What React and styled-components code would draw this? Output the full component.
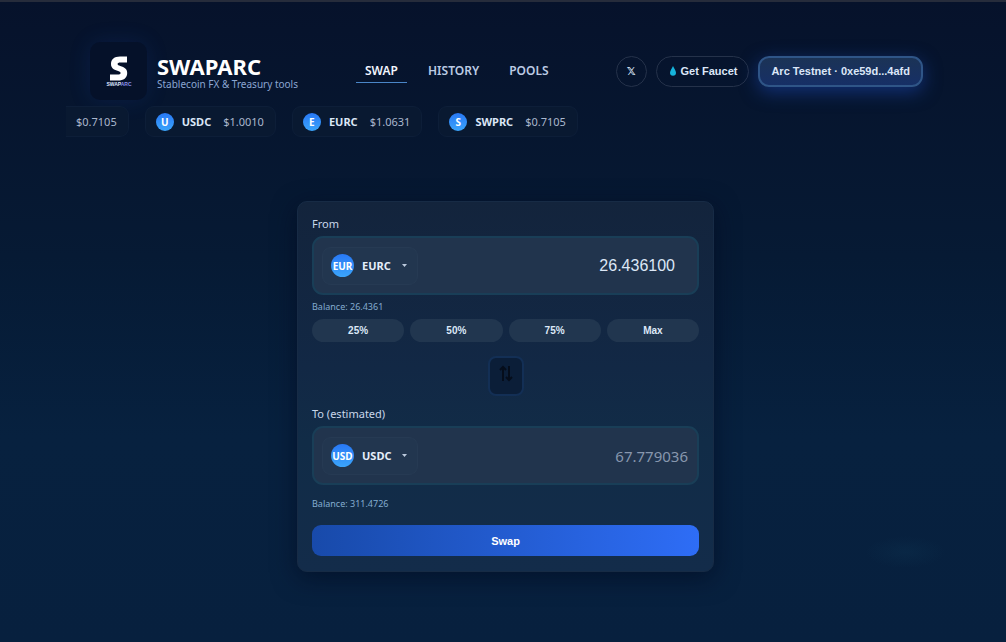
import React, { useState } from "react";
import styled, { createGlobalStyle, css } from "styled-components";

const noto = `"Noto Sans", "Open Sans", sans-serif`;
const arial = `"Liberation Sans", Arial, sans-serif`;

const GlobalStyle = createGlobalStyle`
  * {
    box-sizing: border-box;
  }
  body {
    margin: 0;
    min-height: 100vh;
    border-top: 2px solid #262c3b;
    background:
      radial-gradient(ellipse 40px 16px at 90% 86%, rgba(20, 70, 100, 0.18), transparent),
      linear-gradient(180deg, #06122b 0%, #061a34 40%, #07213f 68%, #07203e 100%);
    color: #e6eefb;
    font-family: ${noto};
  }
`;
const Page = styled.div`
  padding: 39px 61px 24px 66px;
`;
const Header = styled.header`
  display: flex;
  align-items: center;
  justify-content: space-between;
  height: 60px;
  padding: 0 22px 0 24px;
`;
const Brand = styled.div`
  display: flex;
  align-items: center;
  gap: 10px;
`;
const BrandText = styled.div`
  padding-top: 2px;
`;
const LogoBox = styled.div`
  display: flex;
  flex-direction: column;
  align-items: center;
  justify-content: center;
  width: 57px;
  height: 58px;
  border-radius: 10px;
  background: #051129;
  box-shadow: 0 0 22px rgba(37, 82, 190, 0.16);
`;
const BrandName = styled.div`
  font-size: 22px;
  font-weight: 700;
  line-height: 24px;
  color: #fff;
`;
const Tagline = styled.div`
  font-size: 10px;
  line-height: 12px;
  color: #8ba6d2;
`;
const Nav = styled.nav`
  display: flex;
  gap: 12px;
`;
const NavLink = styled.a`
  padding: 4px 9px;
  border-bottom: 1px solid ${({ $active }) => ($active ? "#4a86c8" : "transparent")};
  color: ${({ $active }) => ($active ? "#f2f6ff" : "#bccbe4")};
  font-size: 12px;
  font-weight: 600;
  line-height: 15px;
  text-decoration: none;
`;
const Actions = styled.div`
  display: flex;
  align-items: center;
  gap: 9px;
`;
const pill = css`
  display: flex;
  align-items: center;
  justify-content: center;
  height: 31px;
  border: 1px solid #25324a;
  border-radius: 16px;
  color: #dce7f8;
  font-family: ${arial};
  font-size: 11px;
  font-weight: 700;
  text-decoration: none;
`;
const SocialLink = styled.a`
  ${pill}
  width: 31px;
  font-family: "DejaVu Sans", sans-serif;
`;
const FaucetLink = styled.a`
  ${pill}
  gap: 5px;
  padding: 0 11px 0 13px;
`;
const WalletButton = styled.button`
  ${pill}
  padding: 0 11px;
  border: 2px solid #2f5587;
  border-radius: 11px;
  background: linear-gradient(180deg, #1b3356, #162f66);
  box-shadow: 0 5px 18px rgba(30, 76, 190, 0.5);
  cursor: pointer;
`;
const Ticker = styled.div`
  display: flex;
  gap: 16px;
  margin-top: 5px;
`;
const TickerItem = styled.div`
  display: flex;
  flex: none;
  align-items: center;
  height: 31px;
  padding: 0 11px 0 10px;
  border: 1px solid #0d1e38;
  border-radius: 9px;
  background: #091931;
  font-size: 11px;

  &:first-child {
    border-left: none;
    border-radius: 0 9px 9px 0;
  }
`;
const TickerSymbol = styled.span`
  margin: 0 12px 0 8px;
  color: #dbe6f7;
  font-weight: 700;
`;
const TickerPrice = styled.span`
  color: #a9b7cd;
`;
const Coin = styled.span`
  display: flex;
  flex: none;
  align-items: center;
  justify-content: center;
  width: ${({ $size }) => $size}px;
  height: ${({ $size }) => $size}px;
  border-radius: 50%;
  background: linear-gradient(180deg, #2878f5, #3ba5fb);
  color: #fff;
  font-size: 10px;
  font-weight: 700;
`;
const Card = styled.main`
  max-width: 417px;
  margin: 64px auto 0;
  padding: 14px 14px 15px;
  border: 1px solid #172b45;
  border-radius: 10px;
  background: linear-gradient(180deg, #13243c 0%, #122845 45%, #112c47 65%, #132c4a 100%);
  box-shadow: 0 6px 24px rgba(2, 10, 32, 0.6);
`;
const FieldLabel = styled.label`
  display: block;
  font-size: 11px;
  line-height: 16px;
  color: #c9d7ea;
`;
const Field = styled.div`
  display: flex;
  align-items: center;
  justify-content: space-between;
  height: 59px;
  margin-top: 4px;
  padding: 0 9px 0 8px;
  border: 2px solid #193e57;
  border-radius: 11px;
  background: #21344d;
`;
const TokenPicker = styled.label`
  display: flex;
  align-items: center;
  height: 38px;
  padding: 0 10px 0 8px;
  border: 1px solid #263a53;
  border-radius: 9px;
  background: #22364f;
`;
const TokenSelect = styled.select`
  width: 40px;
  margin-left: 8px;
  padding: 0;
  border: none;
  outline: none;
  background: transparent;
  appearance: none;
  color: #e6eefb;
  font-family: ${noto};
  font-size: 11px;
  font-weight: 700;
`;
const AmountInput = styled.input`
  flex: 1;
  min-width: 0;
  padding: 0 13px 0 0;
  border: none;
  outline: none;
  background: transparent;
  color: #dce7f6;
  font-family: ${arial};
  font-size: 16px;
  text-align: right;
`;
const Estimate = styled.output`
  color: #8797ad;
  font-size: 15px;
`;
const Balance = styled.div`
  margin-top: ${({ $gap }) => $gap}px;
  font-size: 9px;
  line-height: 12px;
  color: #84acd0;
`;
const PercentRow = styled.div`
  display: grid;
  grid-template-columns: repeat(4, 1fr);
  gap: 6px;
  margin-top: 6px;
`;
const PercentButton = styled.button`
  height: 23px;
  padding: 0;
  border: none;
  border-radius: 12px;
  background: #21364f;
  color: #dce8f7;
  font-family: ${arial};
  font-size: 10px;
  font-weight: 700;
  cursor: pointer;
`;
const FlipButton = styled.button`
  display: flex;
  align-items: center;
  justify-content: center;
  width: 36px;
  height: 40px;
  margin: 14px auto 10px;
  padding: 0 0 4px;
  border: 2px solid #132f55;
  border-radius: 8px;
  background: #0b1e38;
  cursor: pointer;
`;
const SubmitButton = styled.button`
  display: block;
  width: 100%;
  height: 31px;
  margin-top: 15px;
  border: none;
  border-radius: 9px;
  background: linear-gradient(90deg, #184aaa, #2e6df6);
  color: #fff;
  font-family: ${arial};
  font-size: 11px;
  font-weight: 700;
  cursor: pointer;
`;

const prices = [
  { price: "$0.7105" },
  { symbol: "USDC", price: "$1.0010" },
  { symbol: "EURC", price: "$1.0631" },
  { symbol: "SWPRC", price: "$0.7105" },
];
const tokens = ["EURC", "USDC", "SWPRC"];
const balances = { EURC: 26.4361, USDC: 311.4726, SWPRC: 0 };
const shares = [
  { label: "25%", value: 0.25 },
  { label: "50%", value: 0.5 },
  { label: "75%", value: 0.75 },
  { label: "Max", value: 1 },
];

const Logo = () => (
  <svg width="28" height="34" viewBox="0 0 28 34" role="img" aria-label="Swaparc logo">
    <path
      d="M22 2.5V8.5H15.5C13.5 8.5 12.6 9 12.6 10C12.6 11 13.6 11.4 15.2 12C19.5 13.4 22.2 14.8 22.2 19C22.2 24 18.6 26.5 13 26.5H5V20.5H12.4C14.4 20.5 15.6 20.2 15.6 19C15.6 17.9 14.4 17.5 12.4 16.8C8.6 15.5 6 14 6 10C6 5.2 9.4 2.5 15 2.5Z"
      fill="#fff"
    />
    <text x="14" y="32" textAnchor="middle" fontFamily="Liberation Sans" fontWeight="700" fontSize="5" fill="#dfe6ff">
      SWAP<tspan fill="#8a8fe8">ARC</tspan>
    </text>
  </svg>
);

const Drop = () => (
  <svg width="6" height="10" viewBox="0 0 6 10" aria-hidden="true">
    <path d="M3 0C4 2.6 6 4.6 6 6.8A3 3 0 0 1 0 6.8C0 4.6 2 2.6 3 0Z" fill="#16b4dc" />
  </svg>
);

const Caret = () => (
  <svg width="5" height="3" viewBox="0 0 5 3" aria-hidden="true">
    <path d="M0 0H5L2.5 3Z" fill="#bccadd" />
  </svg>
);

const FlipIcon = () => (
  <svg width="14" height="18" viewBox="0 0 14 18" fill="none" stroke="#050d1b" strokeWidth="2" aria-hidden="true">
    <path d="M4 16V2M1 5L4 2L7 5" />
    <path d="M10 1V15M7 12L10 15L13 12" />
  </svg>
);

const TokenDropdown = ({ value, onChange, name }) => (
  <TokenPicker>
    <Coin $size={23}>{value.slice(0, 3)}</Coin>
    <TokenSelect aria-label={name} value={value} onChange={(e) => onChange(e.target.value)}>
      {tokens.map((token) => (
        <option key={token}>{token}</option>
      ))}
    </TokenSelect>
    <Caret />
  </TokenPicker>
);

const App = () => {
  const [from, setFrom] = useState("EURC");
  const [to, setTo] = useState("USDC");
  const [amount, setAmount] = useState("26.436100");

  const flip = () => {
    setFrom(to);
    setTo(from);
  };

  return (
    <>
      <GlobalStyle />
      <Page>
        <Header>
          <Brand>
            <LogoBox>
              <Logo />
            </LogoBox>
            <BrandText>
              <BrandName>SWAPARC</BrandName>
              <Tagline>Stablecoin FX &amp; Treasury tools</Tagline>
            </BrandText>
          </Brand>
          <Nav>
            <NavLink href="#swap" $active>SWAP</NavLink>
            <NavLink href="#history">HISTORY</NavLink>
            <NavLink href="#pools">POOLS</NavLink>
          </Nav>
          <Actions>
            <SocialLink href="#x">𝕏</SocialLink>
            <FaucetLink href="#faucet">
              <Drop />
              Get Faucet
            </FaucetLink>
            <WalletButton>Arc Testnet · 0xe59d...4afd</WalletButton>
          </Actions>
        </Header>

        <Ticker>
          {prices.map(({ symbol, price }, i) => (
            <TickerItem key={i}>
              {symbol && (
                <>
                  <Coin $size={18}>{symbol[0]}</Coin>
                  <TickerSymbol>{symbol}</TickerSymbol>
                </>
              )}
              <TickerPrice>{price}</TickerPrice>
            </TickerItem>
          ))}
        </Ticker>

        <Card>
          <FieldLabel htmlFor="amount">From</FieldLabel>
          <Field>
            <TokenDropdown name="From token" value={from} onChange={setFrom} />
            <AmountInput id="amount" inputMode="decimal" value={amount} onChange={(e) => setAmount(e.target.value)} />
          </Field>
          <Balance $gap={6}>Balance: {balances[from]}</Balance>
          <PercentRow>
            {shares.map(({ label, value }) => (
              <PercentButton key={label} onClick={() => setAmount((balances[from] * value).toFixed(6))}>
                {label}
              </PercentButton>
            ))}
          </PercentRow>

          <FlipButton aria-label="Switch tokens" onClick={flip}>
            <FlipIcon />
          </FlipButton>

          <FieldLabel htmlFor="estimate">To (estimated)</FieldLabel>
          <Field>
            <TokenDropdown name="To token" value={to} onChange={setTo} />
            <Estimate id="estimate">67.779036</Estimate>
          </Field>
          <Balance $gap={13}>Balance: {balances[to]}</Balance>
          <SubmitButton>Swap</SubmitButton>
        </Card>
      </Page>
    </>
  );
};

export default App;
